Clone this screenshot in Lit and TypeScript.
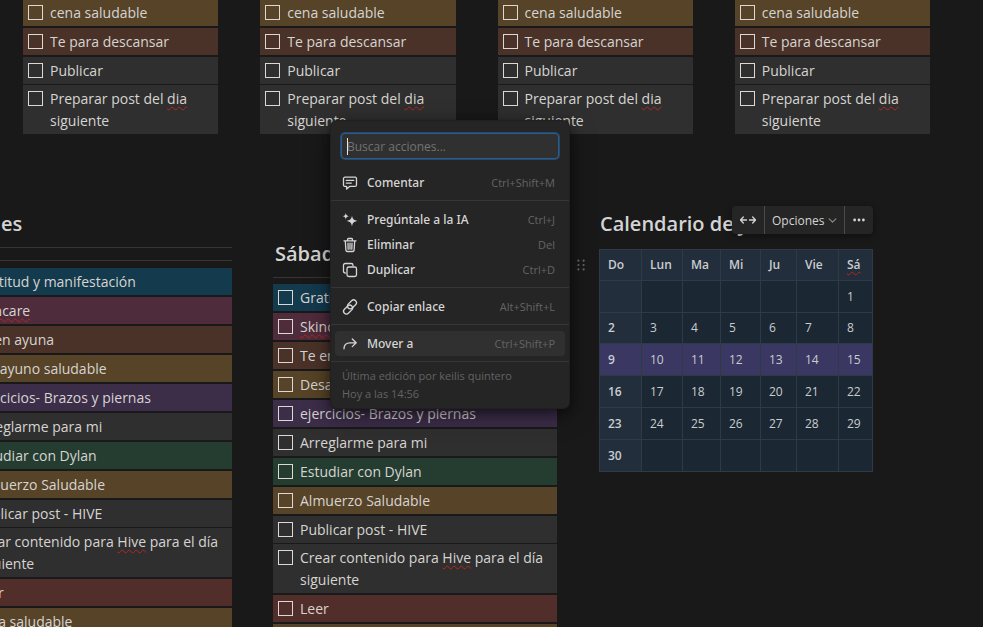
import { LitElement, html, css, svg } from "lit";
import { customElement, property } from "lit/decorators.js";

type Tone = "gold" | "brown" | "gray" | "blue" | "pink" | "purple" | "green" | "red";
interface Task {
  tone: Tone;
  parts: (string | { typo: string })[];
}

const t = (tone: Tone, ...parts: Task["parts"]): Task => ({ tone, parts });

const NIGHT: Task[] = [
  t("gold", "cena saludable"),
  t("brown", "Te para descansar"),
  t("gray", "Publicar"),
  t("gray", "Preparar post del ", { typo: "dia" }, " siguiente"),
];

const DAY: Task[] = [
  t("blue", "Gratitud y manifestación"),
  t("pink", { typo: "Skincare" }),
  t("brown", "Te en ayuna"),
  t("gold", "Desayuno saludable"),
  t("purple", "ejercicios- Brazos y piernas"),
  t("gray", "Arreglarme para mi"),
  t("green", "Estudiar con Dylan"),
  t("gold", "Almuerzo Saludable"),
  t("gray", "Publicar post - HIVE"),
  t("gray", "Crear contenido para ", { typo: "Hive" }, " para el día siguiente"),
  t("red", "Leer"),
  t("gold", "cena saludable"),
];

const WEEKS: string[][] = [
  ["", "", "", "", "", "", "1"],
  ["2", "3", "4", "5", "6", "7", "8"],
  ["9", "10", "11", "12", "13", "14", "15"],
  ["16", "17", "18", "19", "20", "21", "22"],
  ["23", "24", "25", "26", "27", "28", "29"],
  ["30", "", "", "", "", "", ""],
];

const ICONS = {
  comment: svg`<path d="M3 2.200h10a1.500 1.500 0 0 1 1.500 1.500v6.200a1.500 1.500 0 0 1-1.500 1.500H7.600L4.600 14v-2.600H3a1.500 1.500 0 0 1-1.500-1.500V3.700A1.500 1.500 0 0 1 3 2.200z"/><path d="M4.300 5.400h7.400M4.300 8.100h5"/>`,
  ai: svg`<path class="solid" d="M10 3.600c.6 3.600 1.600 4.700 5.400 5.400-3.800.8-4.800 1.800-5.400 5.500-.6-3.700-1.600-4.700-5.400-5.500C8.400 8.300 9.400 7.200 10 3.600zM3.800 1c.4 2.100 1 2.800 3.200 3.200C4.800 4.600 4.200 5.300 3.800 7.400 3.400 5.300 2.800 4.600.6 4.200 2.800 3.800 3.400 3.100 3.800 1z"/>`,
  trash: svg`<path d="M2 3.800h12M5.600 3.600V2.300c0-.5.300-.8.800-.8h3.200c.5 0 .8.300.8.800v1.300M3.300 4l.6 9.100c.1.900.6 1.400 1.500 1.400h5.200c.9 0 1.400-.5 1.500-1.400L12.700 4M6 6.200l.2 6M8 6.200v6M10 6.200l-.2 6"/>`,
  copy: svg`<rect x="5" y="5" width="9.500" height="9.500" rx="1.800"/><path d="M3.300 11h-.1c-1 0-1.700-.7-1.700-1.700V3.200c0-1 .7-1.700 1.700-1.700h6.100c1 0 1.700.7 1.700 1.700v.3"/>`,
  link: svg`<g transform="rotate(-45 8 8)"><rect x="-.4" y="5.700" width="10.400" height="5.600" rx="2.800"/><rect x="6" y="4.700" width="10.400" height="5.600" rx="2.800"/></g>`,
  move: svg`<path d="M2 12.800C2 8.500 4.300 6.800 8 6.800h6M10.300 3l3.900 3.800-3.900 3.800"/>`,
  width: svg`<path d="M6.500 8H.5M3.300 5 .4 8l2.900 3M9.500 8h6M12.700 5l2.900 3-2.900 3"/>`,
  chevron: svg`<path d="M2 5 8 11 14 5"/>`,
  dots: svg`<g class="solid"><circle cx="3" cy="8" r="1.600"/><circle cx="8" cy="8" r="1.600"/><circle cx="13" cy="8" r="1.600"/></g>`,
  grip: svg`<g class="solid"><circle cx="5" cy="3" r="1.200"/><circle cx="11" cy="3" r="1.200"/><circle cx="5" cy="8" r="1.200"/><circle cx="11" cy="8" r="1.200"/><circle cx="5" cy="13" r="1.200"/><circle cx="11" cy="13" r="1.200"/></g>`,
};
type IconName = keyof typeof ICONS;

const iconStyles = css`
  svg {
    display: block;
    width: 16px;
    height: 16px;
    flex: none;
    fill: none;
    stroke: currentColor;
    stroke-width: 1.3;
    stroke-linecap: round;
    stroke-linejoin: round;
  }
  .solid {
    fill: currentColor;
    stroke: none;
  }
  button {
    font: inherit;
    color: inherit;
    background: none;
    border: 0;
    margin: 0;
    padding: 0;
    cursor: pointer;
  }
`;

const icon = (name: IconName) =>
  html`<svg viewBox="0 0 16 16" aria-hidden="true">${ICONS[name]}</svg>`;

@customElement("task-list")
export class TaskList extends LitElement {
  @property({ attribute: false }) tasks: Task[] = [];

  static styles = css`
    :host {
      display: block;
    }
    .list {
      list-style: none;
      margin: 0;
      padding: 0;
    }
    .task {
      margin-top: 2px;
      padding: 3px 4px 2px 5px;
      color: #d6d4d1;
      font-size: 14px;
      line-height: 22px;
    }
    .task:first-child {
      margin-top: 0;
    }
    .gray + .gray {
      margin-top: 1px;
    }
    .label {
      display: flex;
      align-items: flex-start;
      gap: 7px;
    }
    .box {
      appearance: none;
      flex: none;
      box-sizing: border-box;
      width: 15px;
      height: 15px;
      margin: 3px 0 0;
      border: 1px solid #dcd8d3;
    }
    .typo {
      text-decoration: underline wavy #b3261e 1px;
      text-underline-offset: 2px;
      text-decoration-skip-ink: none;
    }
    .gold { background: #564328; }
    .brown { background: #4a3228; }
    .gray { background: #2f2f2f; }
    .blue { background: #143a4e; }
    .pink { background: #4e2c3c; }
    .purple { background: #3c2d49; }
    .green { background: #243d30; }
    .red { background: #522e2a; }
  `;

  render() {
    return html`<ul class="list">
      ${this.tasks.map(
        (task) => html`<li class="task ${task.tone}">
          <label class="label"
            ><input class="box" type="checkbox" /><span
              >${task.parts.map((p) =>
                typeof p === "string" ? p : html`<span class="typo">${p.typo}</span>`
              )}</span
            ></label
          >
        </li>`
      )}
    </ul>`;
  }
}

@customElement("month-table")
export class MonthTable extends LitElement {
  static styles = css`
    :host {
      display: block;
    }
    .month {
      border-collapse: collapse;
      table-layout: fixed;
      width: 274px;
      background: #1b2732;
      color: #c9ccd0;
      font-size: 12px;
      line-height: 18px;
    }
    .month th,
    .month td {
      border: 1px solid #2e3b47;
      height: 31px;
      padding: 0 8px;
      text-align: left;
    }
    .month .short > * {
      height: 30px;
    }
    .month th {
      background: #222e3b;
      font-weight: 600;
    }
    .month .current > * {
      background: #3b3763;
    }
    .w34 { width: 34px; }
    .w36 { width: 36px; }
    .w38 { width: 38px; }
    .w40 { width: 40px; }
    .w41 { width: 41px; }
    .w42 { width: 42px; }
    .typo {
      text-decoration: underline wavy #b3261e 1px;
      text-underline-offset: 2px;
    }
  `;

  render() {
    return html`<table class="month">
      <colgroup>
        <col class="w42" /><col class="w41" /><col class="w38" /><col class="w40" /><col
          class="w36"
        /><col class="w42" /><col class="w34" />
      </colgroup>
      <thead>
        <tr class="short">
          <th scope="col">Do</th>
          <th scope="col">Lun</th>
          <th scope="col">Ma</th>
          <th scope="col">Mi</th>
          <th scope="col">Ju</th>
          <th scope="col">Vie</th>
          <th scope="col"><span class="typo">Sá</span></th>
        </tr>
      </thead>
      <tbody>
        ${WEEKS.map(
          (week, i) => html`<tr class="${i === 2 ? "current" : "week"} ${i === 1 ? "short" : ""}">
            <th scope="row">${week[0]}</th>
            ${week.slice(1).map((day) => html`<td>${day}</td>`)}
          </tr>`
        )}
      </tbody>
    </table>`;
  }
}

@customElement("action-menu")
export class ActionMenu extends LitElement {
  static styles = [
    iconStyles,
    css`
      :host {
        display: block;
        box-sizing: border-box;
        width: 238px;
        padding: 12px 0 5px;
        border-radius: 6px;
        background: #252525;
        box-shadow: 0 0 0 1px #202020, 0 3px 8px rgba(0, 0, 0, 0.4), 0 6px 24px rgba(0, 0, 0, 0.5);
        color: #d6d6d6;
        font-size: 12px;
      }
      .search {
        position: relative;
        margin: 0 10px 5px;
      }
      .field {
        display: block;
        box-sizing: border-box;
        width: 100%;
        height: 26px;
        padding: 0 5px;
        border: 1px solid #2c5c8c;
        border-radius: 4px;
        outline: none;
        background: #303030;
        box-shadow: 0 0 0 1px #234a70;
        color: #d6d6d6;
        font: inherit;
      }
      .field::placeholder {
        color: #737373;
        opacity: 1;
      }
      .caret {
        position: absolute;
        left: 6px;
        top: 5px;
        width: 1px;
        height: 17px;
        background: #e6e6e6;
      }
      .group {
        padding: 6px 4px 5px;
      }
      .group + .group,
      .footer {
        border-top: 1px solid #363636;
      }
      .item {
        display: flex;
        align-items: center;
        width: 100%;
        height: 25px;
        padding: 0 10px 0 7px;
        border-radius: 4px;
        text-align: left;
      }
      .item.active {
        background: #303030;
      }
      .name {
        flex: 1;
        margin-left: 9px;
        font-family: "Noto Sans", sans-serif;
        font-weight: 500;
      }
      .keys {
        color: #646464;
        font-size: 11px;
      }
      .footer {
        padding: 5px 11px 0;
        color: #636363;
        font-size: 11px;
        line-height: 18px;
      }
      .line {
        margin: 0;
      }
    `,
  ];

  private item(name: IconName, label: string, keys: string, active = false) {
    return html`<button type="button" class="item ${active ? "active" : ""}">
      ${icon(name)}<span class="name">${label}</span><span class="keys">${keys}</span>
    </button>`;
  }

  render() {
    return html`
      <div class="search">
        <input class="field" type="text" placeholder="Buscar acciones..." aria-label="Buscar acciones" />
        <span class="caret"></span>
      </div>
      <div class="group">${this.item("comment", "Comentar", "Ctrl+Shift+M")}</div>
      <div class="group">
        ${this.item("ai", "Pregúntale a la IA", "Ctrl+J")}
        ${this.item("trash", "Eliminar", "Del")}
        ${this.item("copy", "Duplicar", "Ctrl+D")}
      </div>
      <div class="group">${this.item("link", "Copiar enlace", "Alt+Shift+L")}</div>
      <div class="group">${this.item("move", "Mover a", "Ctrl+Shift+P", true)}</div>
      <div class="footer">
        <p class="line">Última edición por keilis quintero</p>
        <p class="line">Hoy a las 14:56</p>
      </div>
    `;
  }
}

@customElement("app-root")
export class AppRoot extends LitElement {
  static styles = [
    iconStyles,
    css`
      :host {
        display: block;
        position: relative;
        box-sizing: border-box;
        height: 100vh;
        overflow: hidden;
        background: #191919;
        color: #d4d4d4;
        font-family: "Open Sans", "Noto Sans", sans-serif;
      }
      .nights {
        display: grid;
        grid-template-columns: repeat(4, 1fr);
        gap: 42px;
        margin: -1px 53px 0 23px;
      }
      .days {
        display: grid;
        grid-template-columns: repeat(3, 1fr);
        gap: 41px;
        margin: 74px 101px 0 -52px;
      }
      .day.lower {
        padding-top: 30px;
      }
      .title {
        margin: 0;
        padding: 0 2px;
        font-size: 20px;
        line-height: 32px;
        font-weight: 600;
        white-space: nowrap;
      }
      .rule {
        height: 1px;
        margin: 7px 0 0;
        border: 0;
        background: #353535;
      }
      .rule + .rule {
        margin-top: 12px;
      }
      .rule + task-list {
        margin-top: 7px;
      }
      .lower .rule + task-list {
        margin-top: 6px;
      }
      .calendar {
        position: relative;
      }
      .calendar month-table {
        margin: 9px 0 0 1px;
      }
      .toolbar {
        position: absolute;
        top: -2px;
        left: 134px;
        display: flex;
        height: 28px;
        border-radius: 4px;
        background: #252525;
        box-shadow: 0 2px 6px rgba(0, 0, 0, 0.4);
        font-size: 12px;
      }
      .tool {
        display: flex;
        align-items: center;
        gap: 3px;
        padding: 0 7px;
      }
      .tool:first-child {
        padding: 0 8px;
      }
      .tool + .tool {
        border-left: 1px solid #4a4a4a;
      }
      .tool .small {
        display: block;
        color: #8a8a8a;
      }
      .small svg {
        width: 9px;
        height: 9px;
        stroke-width: 2;
      }
      .tool .dots svg,
      .grip svg {
        width: 14px;
        height: 14px;
      }
      .grip {
        position: absolute;
        top: 50px;
        left: -24px;
        color: #6a6a6a;
      }
      .menu {
        position: absolute;
        top: 121px;
        left: 331px;
      }
    `,
  ];

  render() {
    return html`
      <section class="nights">
        ${[0, 1, 2, 3].map(() => html`<task-list .tasks=${NIGHT}></task-list>`)}
      </section>
      <section class="days">
        <article class="day">
          <h2 class="title">Viernes</h2>
          <hr class="rule" />
          <hr class="rule" />
          <task-list .tasks=${DAY}></task-list>
        </article>
        <article class="day lower">
          <h2 class="title">Sábado</h2>
          <hr class="rule" />
          <task-list .tasks=${DAY}></task-list>
        </article>
        <article class="calendar">
          <h2 class="title">Calendario de junio</h2>
          <month-table></month-table>
          <button type="button" class="grip" aria-label="Arrastrar">${icon("grip")}</button>
          <div class="toolbar">
            <button type="button" class="tool" aria-label="Ancho completo">${icon("width")}</button>
            <button type="button" class="tool">
              Opciones<span class="small">${icon("chevron")}</span>
            </button>
            <button type="button" class="tool" aria-label="Más">
              <span class="dots">${icon("dots")}</span>
            </button>
          </div>
        </article>
      </section>
      <action-menu class="menu"></action-menu>
    `;
  }
}
